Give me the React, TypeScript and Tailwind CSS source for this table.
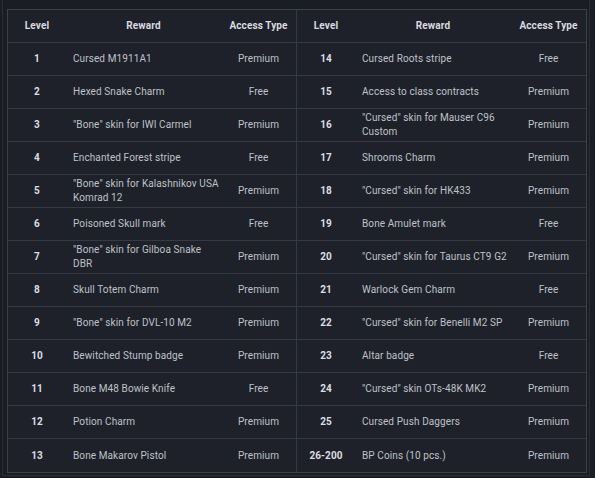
import React from "react"

type Row = { level: string; reward: React.ReactNode; access: string }

const left: Row[] = [
  { level: "1", reward: "Cursed M1911A1", access: "Premium" },
  { level: "2", reward: "Hexed Snake Charm", access: "Free" },
  { level: "3", reward: "\"Bone\" skin for IWI Carmel", access: "Premium" },
  { level: "4", reward: "Enchanted Forest stripe", access: "Free" },
  { level: "5", reward: <>"Bone" skin for Kalashnikov USA<br />Komrad 12</>, access: "Premium" },
  { level: "6", reward: "Poisoned Skull mark", access: "Free" },
  { level: "7", reward: <>"Bone" skin for Gilboa Snake<br />DBR</>, access: "Premium" },
  { level: "8", reward: "Skull Totem Charm", access: "Premium" },
  { level: "9", reward: "\"Bone\" skin for DVL-10 M2", access: "Premium" },
  { level: "10", reward: "Bewitched Stump badge", access: "Premium" },
  { level: "11", reward: "Bone M48 Bowie Knife", access: "Free" },
  { level: "12", reward: "Potion Charm", access: "Premium" },
  { level: "13", reward: "Bone Makarov Pistol", access: "Premium" },
]

const right: Row[] = [
  { level: "14", reward: "Cursed Roots stripe", access: "Free" },
  { level: "15", reward: "Access to class contracts", access: "Premium" },
  { level: "16", reward: <>"Cursed" skin for Mauser C96<br />Custom</>, access: "Premium" },
  { level: "17", reward: "Shrooms Charm", access: "Premium" },
  { level: "18", reward: "\"Cursed\" skin for HK433", access: "Premium" },
  { level: "19", reward: "Bone Amulet mark", access: "Free" },
  { level: "20", reward: "\"Cursed\" skin for Taurus CT9 G2", access: "Premium" },
  { level: "21", reward: "Warlock Gem Charm", access: "Free" },
  { level: "22", reward: "\"Cursed\" skin for Benelli M2 SP", access: "Premium" },
  { level: "23", reward: "Altar badge", access: "Free" },
  { level: "24", reward: "\"Cursed\" skin OTs-48K MK2", access: "Premium" },
  { level: "25", reward: "Cursed Push Daggers", access: "Premium" },
  { level: "26-200", reward: "BP Coins (10 pcs.)", access: "Premium" },
]

function Half({ rows, className }: { rows: Row[]; className?: string }) {
  return (
    <div className={className}>
      <div className="flex h-[33px] items-center border-b border-[#363a43] font-bold text-[#d9dbe0]">
        <div className="w-[58px] text-center">Level</div>
        <div className="flex-1 text-center">Reward</div>
        <div className="w-[75px] text-center">Access Type</div>
      </div>
      {rows.map((r, i) => (
        <div
          key={r.level}
          className={
            "flex h-[33px] items-center " +
            (i < rows.length - 1 ? "border-b border-[#363a43]" : "")
          }
        >
          <div className="w-[58px] text-center font-bold text-[#dcdee3]">{r.level}</div>
          <div className="flex-1 whitespace-nowrap pl-[7px]">{r.reward}</div>
          <div className="w-[75px] text-center">{r.access}</div>
        </div>
      ))}
    </div>
  )
}

export default function App() {
  return (
    <div className="h-[478px] w-[595px] overflow-hidden bg-[#1a1d24] font-['Roboto',sans-serif] text-[10px] leading-[14px] tracking-[0.1px] text-[#bfc2c9]">
      <div className="ml-[2px] h-[476px] w-[588px] border-x border-b border-[#2b2e36] pl-[4px] pt-[9px]">
        <div className="flex w-[580px] border border-[#3d414a] bg-[#1e2129]">
          <Half rows={left} className="w-[289px] border-r border-[#363a43]" />
          <Half rows={right} className="flex-1" />
        </div>
      </div>
    </div>
  )
}
